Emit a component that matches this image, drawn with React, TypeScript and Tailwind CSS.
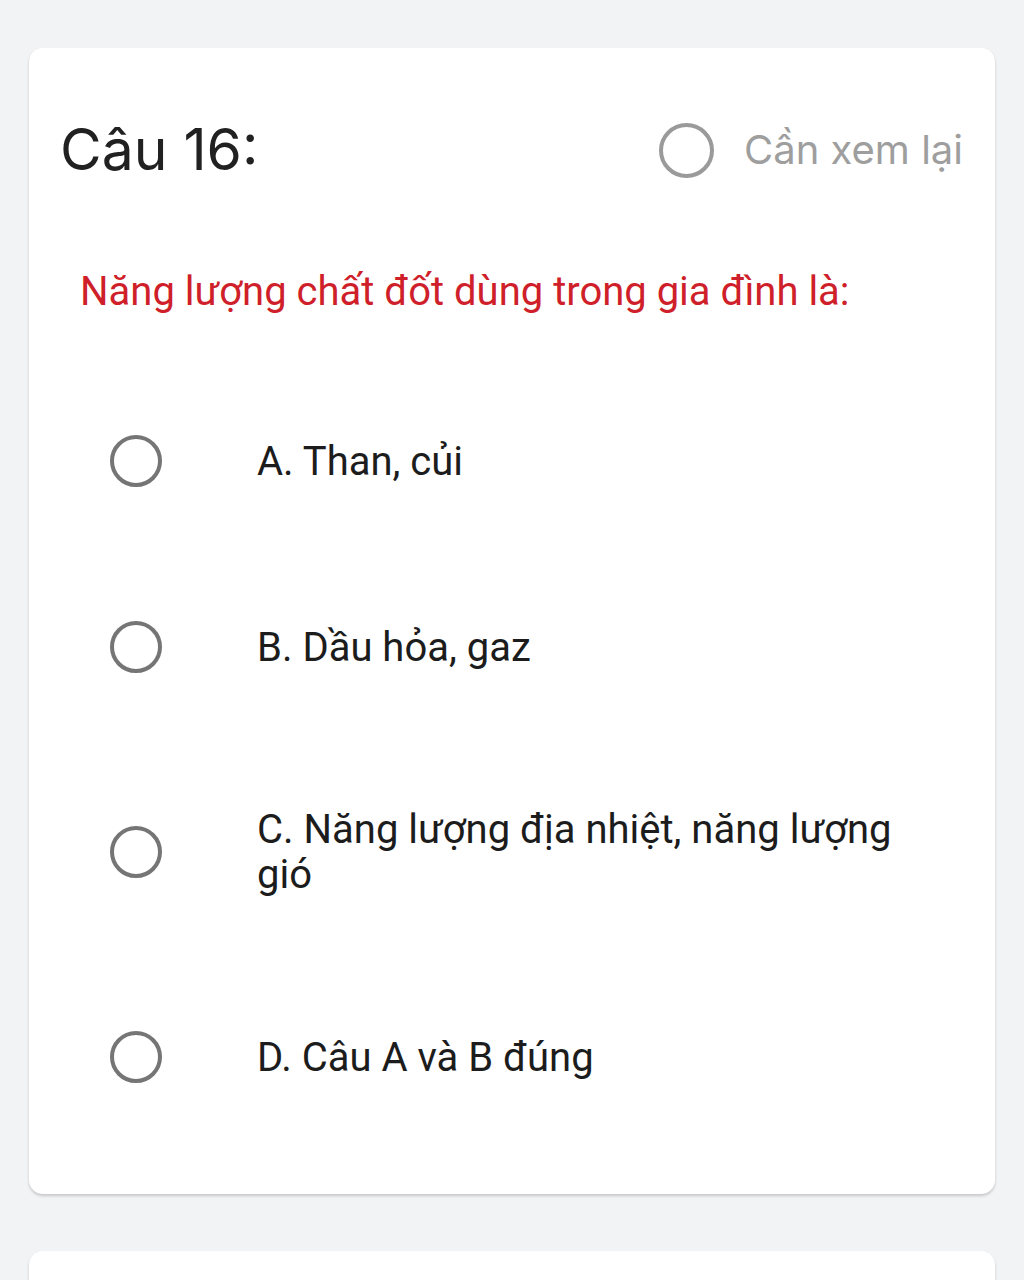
const options = [
  "A. Than, củi",
  "B. Dầu hỏa, gaz",
  "C. Năng lượng địa nhiệt, năng lượng gió",
  "D. Câu A và B đúng",
];

const Radio = ({ className }: { className: string }) => (
  <span className={`block shrink-0 rounded-full bg-white ${className}`} />
);

export default function App() {
  return (
    <div className="h-[1280px] overflow-hidden bg-[#f2f3f5] px-[29px] pt-[48px]">
      <div className="rounded-[14px] bg-white pl-[31px] pr-[32px] pt-[72px] pb-[44px] shadow-[0_2px_3px_rgba(0,0,0,0.18)]">
        <div className="flex h-[60px] items-center justify-between">
          <h2 className="font-['Inter',sans-serif] text-[57px] leading-[60px] text-[#212121]">
            Câu 16:
          </h2>
          <button className="flex items-center gap-[30px]">
            <Radio className="h-[55px] w-[55px] border-[4px] border-[#9a9a9a]" />
            <span className="font-['Inter',sans-serif] text-[40px] leading-[48px] text-[#9e9e9e]">
              Cần xem lại
            </span>
          </button>
        </div>

        <p className="mt-[88px] pl-[20px] font-['Roboto',sans-serif] text-[40px] leading-[48px] text-[#cf1f2a]">
          Năng lượng chất đốt dùng trong gia đình là:
        </p>

        <ul className="mt-[52px]">
          {options.map((opt) => (
            <li key={opt} className="flex items-center py-[67px] pl-[50px]">
              <Radio className="h-[52px] w-[52px] border-[4px] border-[#757575]" />
              <span className="ml-[95px] max-w-[640px] font-['Roboto',sans-serif] text-[40px] leading-[45px] text-[#1c1c1c]">
                {opt}
              </span>
            </li>
          ))}
        </ul>
      </div>

      <div className="mt-[57px] h-[200px] rounded-[14px] bg-white shadow-[0_2px_3px_rgba(0,0,0,0.18)]" />
    </div>
  );
}
